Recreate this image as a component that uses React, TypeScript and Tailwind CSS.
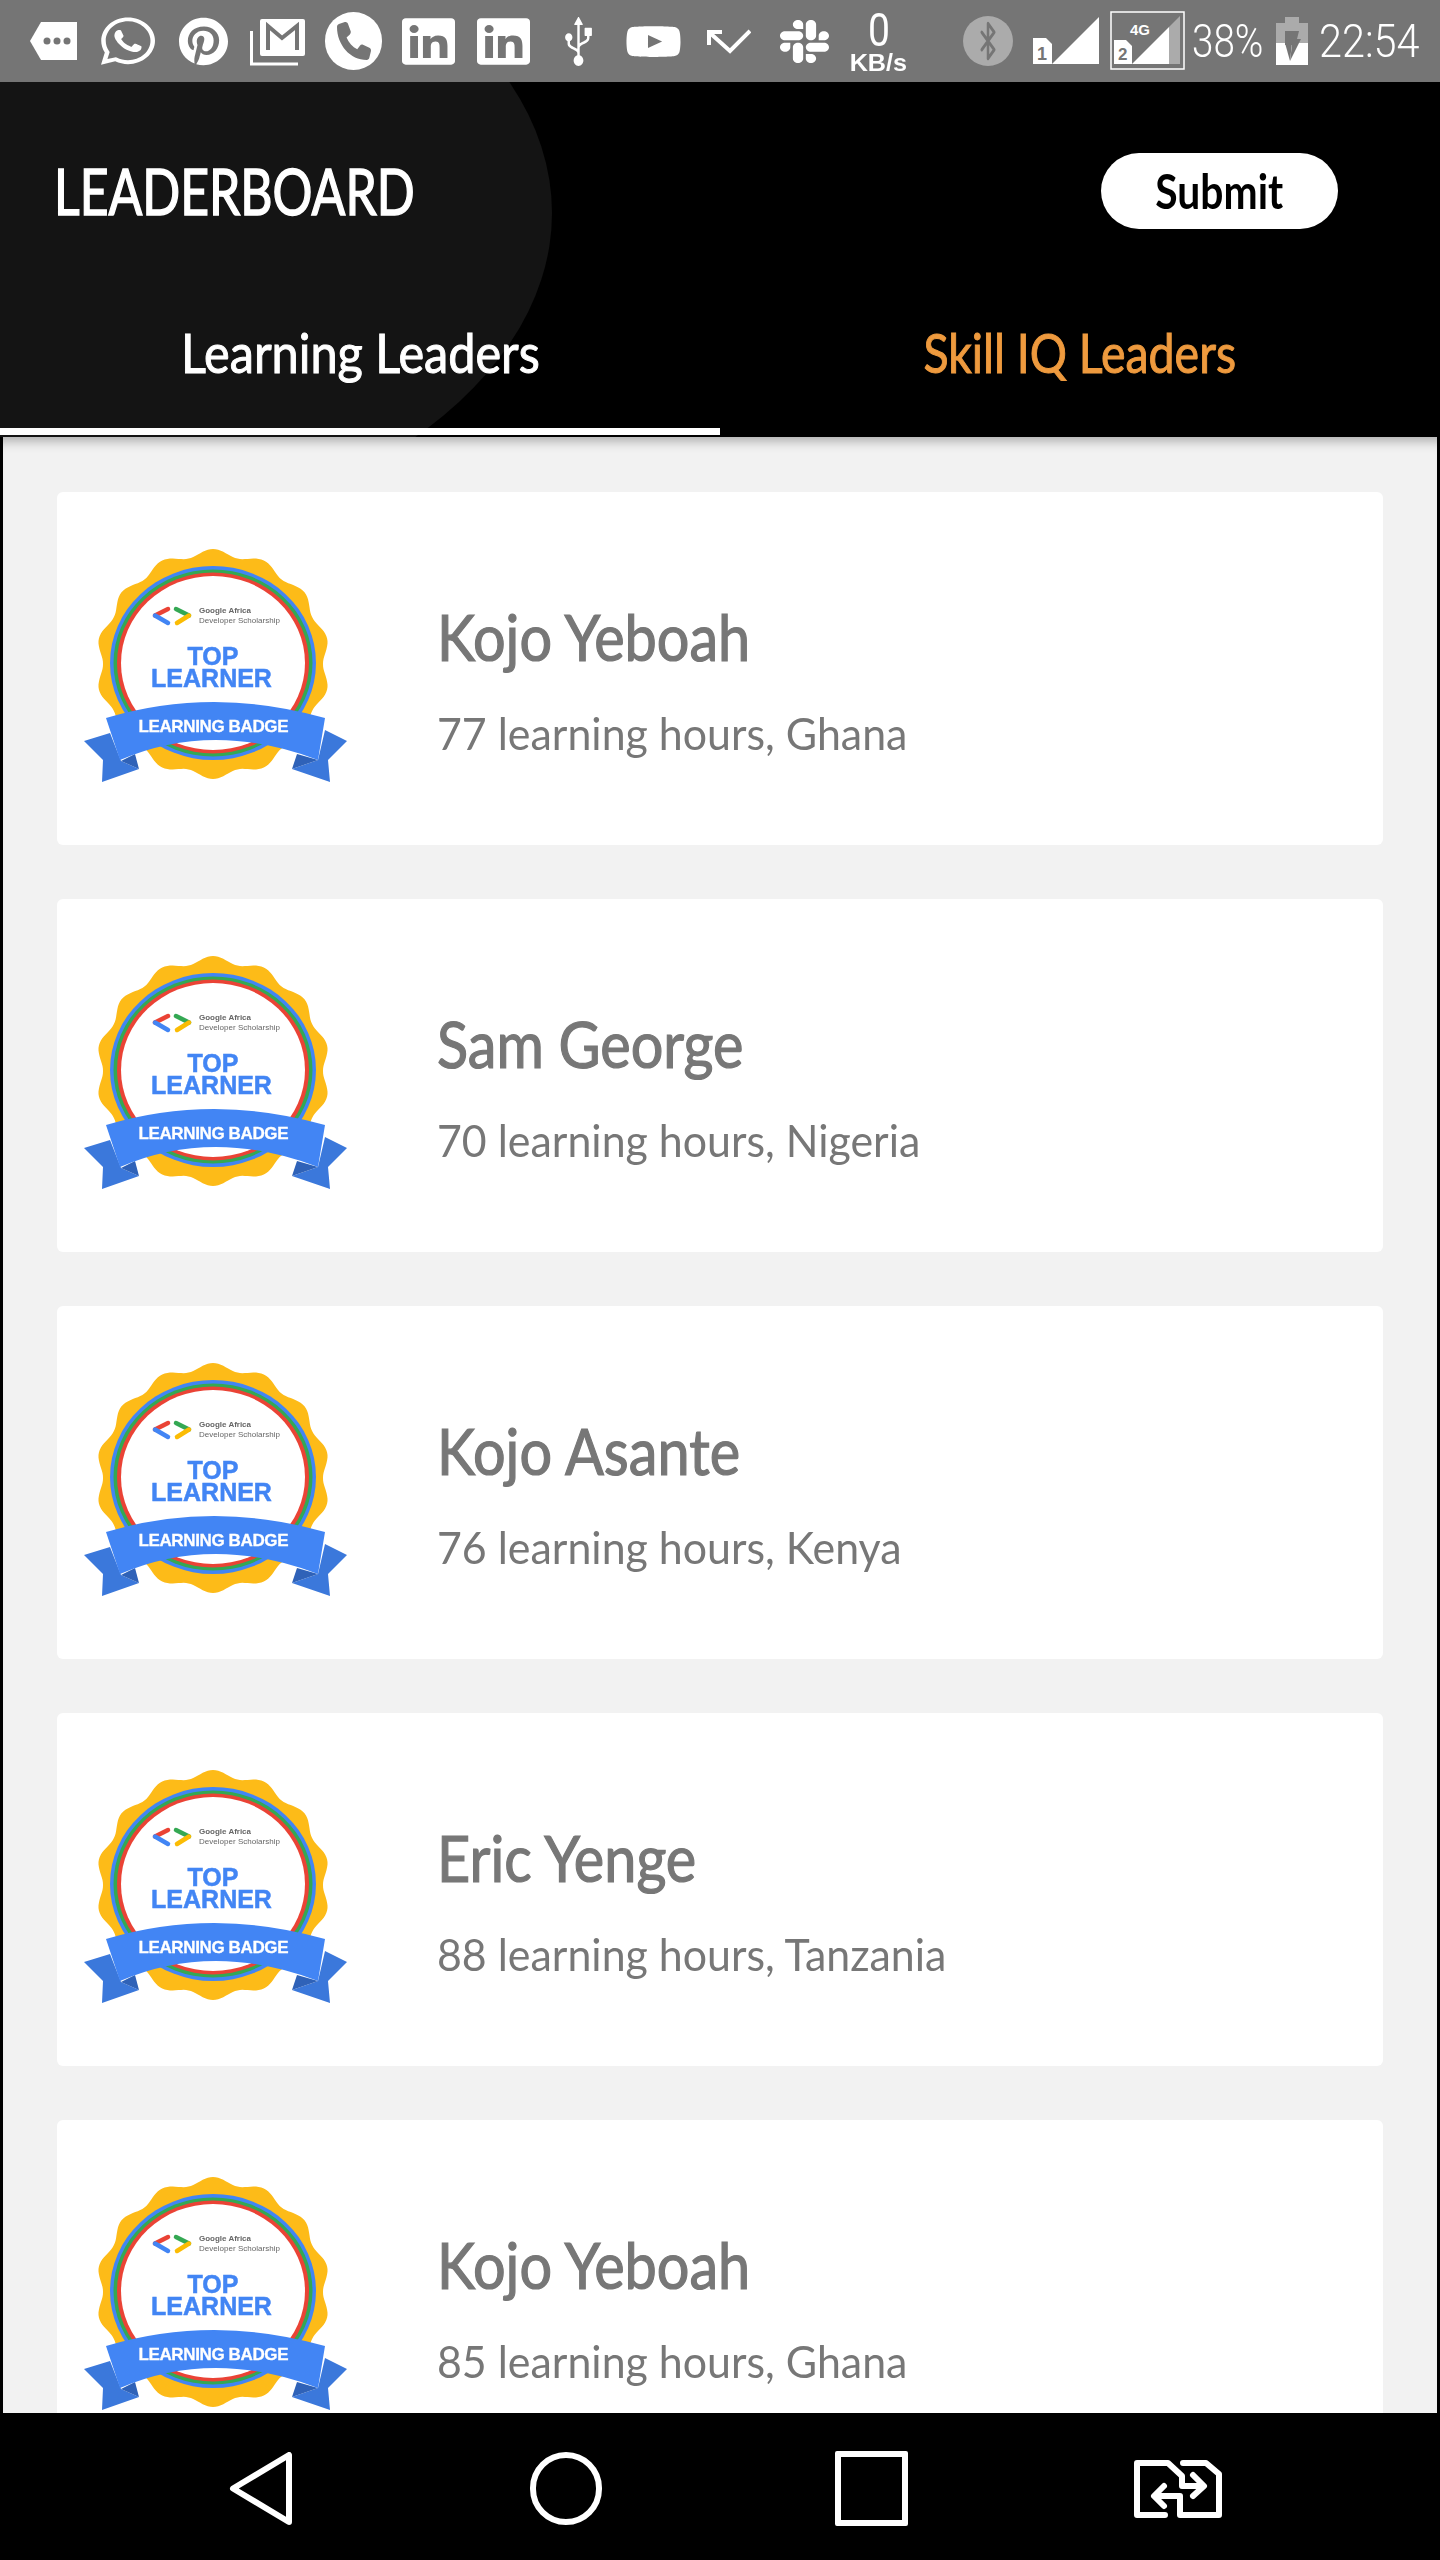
import { FaLinkedin, FaPinterest, FaSlack, FaUsb, FaWhatsapp, FaYoutube } from "react-icons/fa"
import { FaPhone } from "react-icons/fa6"
import { Bluetooth } from "lucide-react"

const leaders = [
  { name: "Kojo Yeboah", hours: "77 learning hours, Ghana" },
  { name: "Sam George", hours: "70 learning hours, Nigeria" },
  { name: "Kojo Asante", hours: "76 learning hours, Kenya" },
  { name: "Eric Yenge", hours: "88 learning hours, Tanzania" },
  { name: "Kojo Yeboah", hours: "85 learning hours, Ghana" },
]

// wavy outline of the yellow seal
function scallopPath() {
  const pts: string[] = []
  for (let i = 0; i < 280; i++) {
    const a = (i / 280) * Math.PI * 2
    const k = 1 + 0.03 * Math.cos(14 * a) - 0.03
    const x = 153 + 117 * k * Math.sin(a)
    const y = 134 - 115 * k * Math.cos(a)
    pts.push(`${x.toFixed(1)},${y.toFixed(1)}`)
  }
  return "M" + pts.join("L") + "Z"
}

function Badge() {
  return (
    <svg viewBox="0 0 300 280" className="w-[300px] h-[280px] shrink-0 blur-[0.4px]">
      <path d={scallopPath()} fill="#FDBB18" />
      <ellipse cx="153" cy="133" rx="103" ry="97" fill="#4285F4" />
      <ellipse cx="153" cy="133" rx="99.5" ry="93.5" fill="#34A853" />
      <ellipse cx="153" cy="133" rx="96" ry="90.5" fill="#EA4335" />
      <ellipse cx="153" cy="133" rx="92" ry="87" fill="#fff" />
      <g strokeWidth="4.5" strokeLinecap="round" fill="none">
        <path d="M108 79L95 85.5" stroke="#EA4335" />
        <path d="M95 85.5L108 93" stroke="#4285F4" />
        <path d="M116 79L129 85.5" stroke="#34A853" />
        <path d="M129 85.5L117 93" stroke="#FBBC04" />
      </g>
      <g fontFamily="'Liberation Sans', sans-serif">
        <text x="139" y="83" fontSize="8" fontWeight="700" fill="#666" textLength="52">Google Africa</text>
        <text x="139" y="93" fontSize="8" fill="#666" textLength="81">Developer Scholarship</text>
        <text x="153" y="135" fontSize="25" fontWeight="700" fill="#4285F4" stroke="#4285F4" strokeWidth="0.5" textAnchor="middle">TOP</text>
        <text x="151.5" y="157" fontSize="25" fontWeight="700" fill="#4285F4" stroke="#4285F4" strokeWidth="0.5" textAnchor="middle">LEARNER</text>
      </g>
      <path d="M24 211L50 203L61 231L79 239L42 252L43 230Z" fill="#3B78DB" />
      <path d="M61 231L79 239L75 224Z" fill="#2F62B8" />
      <path d="M287 211L265 200L258 230L232 239L270 252L268 230Z" fill="#3B78DB" />
      <path d="M258 230L232 239L237 224Z" fill="#2F62B8" />
      <path d="M46 188Q153 156 265 188L258 230Q153 190 60 230Z" fill="#4285F4" />
      <text x="153.5" y="202" fontSize="17" fontWeight="700" fill="#fff" stroke="#fff" strokeWidth="0.3" textAnchor="middle" fontFamily="'Liberation Sans', sans-serif" textLength="150">LEARNING BADGE</text>
    </svg>
  )
}

function StatusBar() {
  return (
    <div className="flex h-[82px] shrink-0 items-start bg-[#757575] text-white font-['Roboto',sans-serif]">
      <svg viewBox="0 0 47 38" className="ml-[30px] mt-[22px] h-[38px] w-[47px]" fill="white">
        <path d="M11 0H47V38H11L0 19Z" />
        <circle cx="17" cy="19" r="3.5" fill="#757575" />
        <circle cx="27" cy="19" r="3.5" fill="#757575" />
        <circle cx="37" cy="19" r="3.5" fill="#757575" />
      </svg>
      <FaWhatsapp preserveAspectRatio="none" className="ml-[24px] mt-[14px] h-[54px] w-[54px]" />
      <FaPinterest preserveAspectRatio="none" className="ml-[24px] mt-[17px] h-[49px] w-[49px]" />
      <svg viewBox="0 0 57 49" className="ml-[22px] mt-[17px] h-[49px] w-[57px]" fill="none" stroke="white">
        <path d="M1.5 14V47H48" strokeWidth="3" />
        <rect x="10" y="2" width="45" height="37" rx="2" fill="white" stroke="none" />
        <path d="M18 33V9L32 21L47 9V33" stroke="#757575" strokeWidth="4" />
      </svg>
      <div className="ml-[18px] mt-[12px] flex h-[58px] w-[57px] items-center justify-center rounded-full bg-white">
        <FaPhone preserveAspectRatio="none" className="h-[38px] w-[34px] text-[#757575]" />
      </div>
      <FaLinkedin preserveAspectRatio="none" className="ml-[20px] mt-[15px] h-[53px] w-[53px]" />
      <FaLinkedin preserveAspectRatio="none" className="ml-[22px] mt-[15px] h-[53px] w-[53px]" />
      <div className="ml-[31px] mt-[17px] flex h-[49px] w-[35px] items-center justify-center">
        <FaUsb preserveAspectRatio="none" className="h-[35px] w-[49px] shrink-0 -rotate-90" />
      </div>
      <FaYoutube preserveAspectRatio="none" className="ml-[29px] mt-[21px] h-[41px] w-[57px]" />
      <svg viewBox="0 0 44 25" className="ml-[25px] mt-[29px] h-[25px] w-[44px]" fill="none" stroke="white" strokeWidth="4">
        <path d="M2 16V3H15M3 4L23 22L43 2" />
      </svg>
      <FaSlack preserveAspectRatio="none" className="ml-[29px] mt-[17px] h-[49px] w-[49px]" />
      <div className="ml-[21px] flex w-[57px] flex-col items-center">
        <span className="mt-[8px] h-[44px] text-[46px] leading-[44px] scale-x-[0.85]">0</span>
        <span className="text-[24px] leading-[22px] font-bold font-['Liberation_Sans',sans-serif] whitespace-nowrap scale-x-[1.05]">KB/s</span>
      </div>
      <div className="ml-[56px] mt-[16px] flex h-[50px] w-[50px] items-center justify-center rounded-full bg-[#ababab]">
        <Bluetooth className="h-[42px] w-[30px] text-[#757575]" strokeWidth={2} preserveAspectRatio="none" />
      </div>
      <svg viewBox="0 0 66 47" className="ml-[20px] mt-[17px] h-[47px] w-[66px]">
        <path d="M19 47L66 0V47Z" fill="white" />
        <path d="M0 21H13L19 27V47H0Z" fill="white" />
        <text x="4" y="43" fontSize="18" fontWeight="700" fill="#757575" fontFamily="'Liberation Sans', sans-serif">1</text>
      </svg>
      <svg viewBox="0 0 75 59" className="ml-[11px] mt-[11px] h-[59px] w-[75px]">
        <rect x="1" y="1" width="73" height="57" fill="none" stroke="white" strokeWidth="1.5" />
        <path d="M22 53L59 16V53Z" fill="white" />
        <path d="M59 16L70 5V53H59Z" fill="#ababab" />
        <path d="M4 29H16L22 35V53H4Z" fill="white" />
        <text x="8" y="49" fontSize="17" fontWeight="700" fill="#757575" fontFamily="'Liberation Sans', sans-serif">2</text>
        <text x="20" y="24" fontSize="15" fontWeight="700" fill="white" fontFamily="'Liberation Sans', sans-serif">4G</text>
      </svg>
      <div className="ml-[7px] mt-[18px] w-[69px] origin-left scale-x-[0.84] whitespace-nowrap text-[46px] leading-[46px] font-light">38%</div>
      <svg viewBox="0 0 32 48" className="ml-[15px] mt-[17px] h-[48px] w-[32px]">
        <path d="M9 0H23V6H32V48H0V6H9Z" fill="#ababab" />
        <path d="M0 26H32V48H0Z" fill="white" />
        <path d="M9 14H23L21 22H25L14 44L16 28H9Z" fill="#757575" />
        <path d="M9 26H16L14 44Z" fill="#757575" />
      </svg>
      <div className="ml-[11px] mt-[18px] w-[101px] origin-left scale-x-[0.9] whitespace-nowrap text-[46px] leading-[46px] font-light">22:54</div>
    </div>
  )
}

function Header() {
  return (
    <div className="relative h-[355px] shrink-0 overflow-hidden bg-black pb-[2px] font-['Lato',sans-serif]">
      {/* soft dark shape behind the title */}
      <div className="absolute left-[-552px] top-[-209px] h-[680px] w-[1104px] rounded-[50%] bg-[#141414]" />
      <div className="relative flex h-[218px] items-center justify-between pl-[54px] pr-[102px]">
        <h1 className="origin-left scale-x-[0.78] text-[64px] leading-none font-normal text-white whitespace-nowrap [-webkit-text-stroke:1.5px_white]">LEADERBOARD</h1>
        <button className="flex h-[76px] w-[237px] items-center justify-center rounded-full bg-white">
          <span className="scale-x-[0.85] text-[48px] leading-none font-bold text-black">Submit</span>
        </button>
      </div>
      <div className="relative flex h-[135px]">
        <div className="flex w-[720px] items-center justify-center border-b-[7px] border-white pb-[23px]">
          <span className="scale-x-[0.9] text-[54px] leading-none font-normal text-white whitespace-nowrap [-webkit-text-stroke:1px_white]">Learning Leaders</span>
        </div>
        <div className="flex w-[720px] items-center justify-center pb-[30px]">
          <span className="scale-x-[0.86] text-[54px] leading-none font-normal text-[#EE9A3E] whitespace-nowrap [-webkit-text-stroke:1px_#EE9A3E]">Skill IQ Leaders</span>
        </div>
      </div>
    </div>
  )
}

function LeaderCard({ name, hours }: { name: string; hours: string }) {
  return (
    <div className="flex h-[353px] shrink-0 items-start rounded-md bg-white pl-[3px] pt-[38px] font-['Lato',sans-serif]">
      <Badge />
      <div className="ml-[77px] flex flex-col pt-[72px]">
        <div className="origin-left scale-x-[0.914] whitespace-nowrap text-[63px] leading-[70px] font-normal text-[#777] [-webkit-text-stroke:1.2px_#777]">{name}</div>
        <div className="mt-[36px] origin-left scale-x-[0.953] whitespace-nowrap text-[45px] leading-[50px] font-normal text-[#777]">{hours}</div>
      </div>
    </div>
  )
}

function NavBar() {
  return (
    <div className="flex h-[147px] shrink-0 items-start bg-black">
      <svg viewBox="0 0 63 73" className="ml-[229px] mt-[39px] h-[73px] w-[63px]" fill="none" stroke="white" strokeWidth="6">
        <path d="M60 3V70L4 36.5Z" strokeLinejoin="round" />
      </svg>
      <div className="ml-[238px] mt-[39px] h-[73px] w-[72px] rounded-full border-[6px] border-white" />
      <div className="ml-[233px] mt-[38px] h-[75px] w-[73px] rounded-[2px] border-[6px] border-white" />
      <svg viewBox="0 0 88 58" className="ml-[226px] mt-[47px] h-[58px] w-[88px]" fill="none" stroke="white" strokeWidth="6" strokeLinecap="round" strokeLinejoin="round">
        <path d="M31 55H3V3H34L48 16V26H68" />
        <path d="M59 15L70 26L59 36" />
        <path d="M49 3H72L85 14V55H46V36H22" />
        <path d="M30 26L20 36L30 46" />
      </svg>
    </div>
  )
}

export default function App() {
  return (
    <div className="flex h-[2560px] w-[1440px] flex-col overflow-hidden bg-black">
      <StatusBar />
      <Header />
      <div className="flex flex-1 flex-col gap-[54px] overflow-hidden border-x-[3px] border-black bg-[#f2f2f2] pl-[54px] pr-[54px] pt-[55px] shadow-[inset_0_14px_12px_-10px_rgba(0,0,0,0.3)]">
        {leaders.map((l, i) => (
          <LeaderCard key={i} name={l.name} hours={l.hours} />
        ))}
      </div>
      <NavBar />
    </div>
  )
}
